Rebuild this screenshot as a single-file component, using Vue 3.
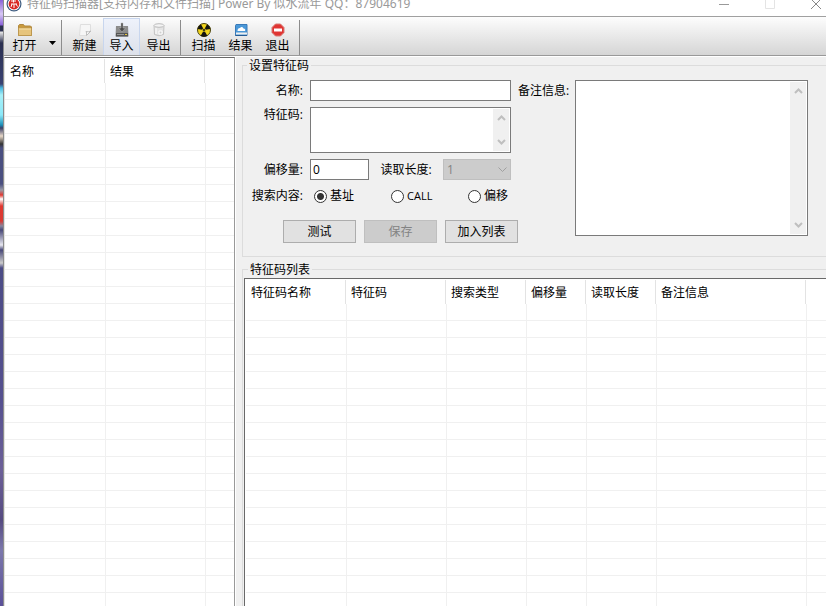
<script setup>
import { ref } from 'vue'

const name = ref('')
const code = ref('')
const offset = ref('0')
const length = ref('1')
const target = ref('基址')
const remark = ref('')
const targets = ['基址', 'CALL', '偏移']
const resultColumns = [
  { title: '名称', width: 100 },
  { title: '结果', width: 100 },
]
const codeColumns = [
  { title: '特征码名称', width: 100 },
  { title: '特征码', width: 100 },
  { title: '搜索类型', width: 80 },
  { title: '偏移量', width: 60 },
  { title: '读取长度', width: 70 },
  { title: '备注信息', width: 150 },
]
const rowCount = 60
</script>

<template>
  <div class="screen">
    <div class="desktop"></div>
    <div class="window">
      <header class="titlebar">
        <svg class="app-icon" width="16" height="16" viewBox="0 0 16 16">
          <circle cx="8" cy="8" r="7.5" fill="#3d5c80" />
          <circle cx="8" cy="8" r="6.3" fill="#fff" />
          <circle cx="8" cy="8" r="5.4" fill="#d92a25" />
          <path d="M5 5h5M7.5 3.5v3M5 8h6M6 8l-1 3M8 8v4M10 8l1.500 2.500" stroke="#fff" fill="none" />
        </svg>
        <h1 class="title">特征码扫描器[支持内存和文件扫描] Power By 似水流年 QQ：87904619</h1>
        <div class="controls">
          <button class="control" aria-label="最小化">
            <svg width="10" height="10" viewBox="0 0 10 10"><path d="M0 5.500h10" stroke="#999" /></svg>
          </button>
          <button class="control" aria-label="最大化" disabled>
            <svg width="10" height="10" viewBox="0 0 10 10"><path d="M.5.5h9v9h-9z" stroke="#e4e4e4" fill="none" /></svg>
          </button>
          <button class="control" aria-label="关闭">
            <svg width="10" height="10" viewBox="0 0 10 10"><path d="M0 0l10 10M10 0L0 10" stroke="#888" /></svg>
          </button>
        </div>
      </header>

      <nav class="toolbar">
        <button class="tool">
          <svg width="16" height="16" viewBox="0 0 16 16">
            <path d="M1.500 13.500v-10l1-1h4l1 1.500h6l1 1v8.500z" fill="#c99a3c" stroke="#b08840" />
            <path d="M1.500 6h13v7.500h-13z" fill="#e6c47c" stroke="#bd9850" />
            <path d="M2 7h12" stroke="#f8e2a8" />
          </svg>
          <span>打开</span>
        </button>
        <button class="drop" aria-label="打开选项">
          <svg width="7" height="4" viewBox="0 0 7 4"><path d="M0 0h7L3.500 4z" /></svg>
        </button>
        <i class="divider"></i>
        <button class="tool">
          <svg width="16" height="16" viewBox="0 0 16 16">
            <path d="M3.500 2.500h10v7l-4 4h-7z" fill="#f6f6f6" stroke="#dedede" />
            <path d="M9.500 13.500q.5-3-.5-4 2 1 5-.5z" fill="#fff" stroke="#bdbdbd" />
          </svg>
          <span>新建</span>
        </button>
        <button class="tool active">
          <svg width="16" height="16" viewBox="0 0 16 16">
            <path d="M2 4h12l.5 10.500h-13z" fill="#8b8b8b" />
            <path d="M2 11h12v3.500H2z" fill="#555" />
            <path d="M3 12.500h7" stroke="#999" />
            <path d="M11 12h2v1h-2z" fill="#e8c638" />
            <path d="M7 1h2v5h2.500L8 10 4.500 6H7z" fill="#4c4c4c" stroke="#b8b8b8" stroke-width=".5" />
          </svg>
          <span>导入</span>
        </button>
        <button class="tool">
          <svg width="16" height="16" viewBox="0 0 16 16">
            <path d="M3 3.500h10l-.5 9q-4.500 2.500-9 0z" fill="#e4e4e4" stroke="#c4c4c4" />
            <ellipse cx="8" cy="3.500" rx="5" ry="1.800" fill="#f4f4f4" stroke="#bcbcbc" />
            <path d="M5 6v6M8 9h3v3H8z" stroke="#fff" fill="#cfcfcf" />
          </svg>
          <span>导出</span>
        </button>
        <i class="divider"></i>
        <button class="tool">
          <svg width="16" height="16" viewBox="0 0 16 16">
            <circle cx="8" cy="8" r="6.500" fill="#f2d51c" stroke="#4a430c" />
            <path d="M8 8L1.500 7A6.500 6.500 0 0 1 5 2.300zM8 8l3-5.700A6.500 6.500 0 0 1 14.500 7zM8 8l3.300 5.700a6.500 6.500 0 0 1-6.600 0z" fill="#151510" />
            <circle cx="8" cy="8" r="1.500" fill="#151510" stroke="#f2d51c" stroke-width=".7" />
          </svg>
          <span>扫描</span>
        </button>
        <button class="tool">
          <svg width="16" height="16" viewBox="0 0 16 16">
            <path d="M3 2.500h11v11H2.500v-10z" fill="#4a98d8" stroke="#3a7ab8" />
            <path d="M4.500 9h7.500q1-2-1.500-2.500Q9 4 7 6 4.500 6 4.500 9z" fill="#fff" />
            <path d="M3 11.500h11" stroke="#eee" stroke-width="2" />
            <path d="M2.500 13.500h11.500" stroke="#245b94" />
          </svg>
          <span>结果</span>
        </button>
        <button class="tool">
          <svg width="16" height="16" viewBox="0 0 16 16">
            <path d="M5.500 2h5l3.500 3.500v5L10.500 14h-5L2 10.500v-5z" fill="#e03533" stroke="#d87a74" />
            <path d="M4 6.500h8v3H4z" fill="#fff" />
          </svg>
          <span>退出</span>
        </button>
        <i class="divider"></i>
      </nav>

      <main class="content">
        <section class="results">
          <table class="list">
            <colgroup>
              <col v-for="c in resultColumns" :key="c.title" :style="{ width: c.width + 'px' }" />
              <col />
            </colgroup>
            <thead>
              <tr><th v-for="c in resultColumns" :key="c.title">{{ c.title }}</th><th></th></tr>
            </thead>
            <tbody>
              <tr v-for="r in rowCount" :key="r"><td v-for="c in resultColumns" :key="c.title"></td><td></td></tr>
            </tbody>
          </table>
        </section>

        <div class="side">
          <fieldset class="group">
            <legend>设置特征码</legend>
            <form class="form" @submit.prevent>
              <label for="name" class="caption">名称:</label>
              <input id="name" v-model="name" class="box field" type="text" />
              <label for="remark" class="remark-label">备注信息:</label>
              <div class="memo remark">
                <textarea id="remark" v-model="remark"></textarea>
                <div class="scroll">
                  <svg width="9" height="6" viewBox="0 0 9 6"><path d="M1 5l3.500-3.500L8 5" /></svg>
                  <svg width="9" height="6" viewBox="0 0 9 6"><path d="M1 1l3.500 3.500L8 1" /></svg>
                </div>
              </div>

              <label for="code" class="caption top">特征码:</label>
              <div class="memo field">
                <textarea id="code" v-model="code"></textarea>
                <div class="scroll">
                  <svg width="9" height="6" viewBox="0 0 9 6"><path d="M1 5l3.500-3.500L8 5" /></svg>
                  <svg width="9" height="6" viewBox="0 0 9 6"><path d="M1 1l3.500 3.500L8 1" /></svg>
                </div>
              </div>

              <label for="offset" class="caption">偏移量:</label>
              <div class="pair field">
                <input id="offset" v-model="offset" class="box short" type="text" />
                <label for="length">读取长度:</label>
                <div class="select">
                  <select id="length" v-model="length" disabled><option>1</option></select>
                  <svg width="9" height="6" viewBox="0 0 9 6"><path d="M.5.5l4 4 4-4" /></svg>
                </div>
              </div>

              <span id="target-label" class="caption">搜索内容:</span>
              <div class="radios field" role="radiogroup" aria-labelledby="target-label">
                <label v-for="t in targets" :key="t" :class="{ latin: t === 'CALL' }">
                  <input v-model="target" type="radio" name="target" :value="t" />{{ t }}
                </label>
              </div>

              <div class="actions">
                <button type="button">测试</button>
                <button type="button" disabled>保存</button>
                <button type="button">加入列表</button>
              </div>
            </form>
          </fieldset>

          <fieldset class="group codes">
            <legend>特征码列表</legend>
            <div class="frame">
              <table class="list">
                <colgroup>
                  <col v-for="c in codeColumns" :key="c.title" :style="{ width: c.width + 'px' }" />
                  <col />
                </colgroup>
                <thead>
                  <tr><th v-for="c in codeColumns" :key="c.title">{{ c.title }}</th><th></th></tr>
                </thead>
                <tbody>
                  <tr v-for="r in rowCount" :key="r"><td v-for="c in codeColumns" :key="c.title"></td><td></td></tr>
                </tbody>
              </table>
            </div>
          </fieldset>
        </div>
      </main>
    </div>
  </div>
</template>

<style>
body {
  margin: 0;
  overflow: hidden;
}
</style>

<style scoped>
* {
  box-sizing: border-box;
}
.screen,
.screen button,
.screen input,
.screen select,
.screen textarea {
  font: 12px/16px "Open Sans", "Noto Sans CJK SC", sans-serif;
  color: #000;
}
.screen {
  display: flex;
  height: 100vh;
  overflow: hidden;
}
.desktop {
  width: 3px;
  background: linear-gradient(
    #8a62d8 0, #d8c8f4 14px, #8a62d8 25px, #2b3050 26px, #2b3050 31px, #e8e8e8 32px, #2b3050 43px,
    #3a4272 84px, #48b8e0 88px, #a8f0f8 95px, #8ce8f8 115px, #1c8fb8 125px, #3a3f68 128px,
    #e8d8c8 136px, #333 144px, #4a4f80 148px, #4a4f80 184px, #9a9aa8 190px, #e03830 195px,
    #fff 199px, #e03830 206px, #d83a34 221px, #8888a0 226px, #484878 230px, #e8e8f0 245px,
    #484878 250px, #ccc 263px, #4c4c86 268px, #55508f 400px, #6c6098 470px, #554a80 520px,
    #7c78ac 550px, #5a5098 100%
  );
}
.window {
  display: flex;
  flex: 1;
  flex-direction: column;
  min-width: 0;
  border-left: 1px solid #8c8c8c;
  background: #f0f0f0;
}
.titlebar {
  display: flex;
  flex: none;
  align-items: center;
  height: 17px;
  padding: 0 5px 9px 2px;
  border-bottom: 1px solid #a0a0a0;
  background: #fff;
}
.app-icon,
.control {
  flex: none;
}
.title {
  flex: 1;
  margin: 0 0 0 5px;
  font-family: "Noto Sans", "Noto Sans CJK SC", sans-serif;
  font-size: 12px;
  font-weight: normal;
  line-height: 16px;
  white-space: nowrap;
  color: #999;
}
.controls {
  display: flex;
  gap: 36px;
}
.control {
  display: flex;
  padding: 0;
  border: 0;
  background: none;
}
.toolbar {
  display: flex;
  flex: none;
  height: 39px;
  padding-left: 2px;
  border-bottom: 1px solid #999;
  background: linear-gradient(#fdfdfd, #d5d5d5);
}
.tool {
  display: flex;
  flex-direction: column;
  align-items: center;
  width: 37px;
  margin-top: 1px;
  padding: 3px 0 0;
  border: 1px solid transparent;
  background: none;
}
.tool.active {
  border-color: #c8d6ee;
  border-bottom: 0;
  background: linear-gradient(#eef2fb, #dde1ea);
}
.drop {
  display: flex;
  align-items: center;
  width: 15px;
  padding: 13px 0 0 6px;
  border: 0;
  background: none;
}
.drop svg {
  flex: none;
}
.divider {
  width: 1px;
  margin: 3px 4px 0 3px;
  background: #8c8c8c;
}
.content {
  display: flex;
  flex: 1;
  min-height: 0;
  border-top: 1px solid #fff;
}
.results {
  flex: none;
  width: 231px;
  padding-top: 1px;
  overflow: hidden;
  border-top: 1px solid #696969;
  border-right: 1px solid #999;
  border-left: 1px solid #e3e3e3;
  background: #fff;
}
.list {
  width: 100%;
  table-layout: fixed;
  border-collapse: separate;
  border-spacing: 0;
}
th {
  height: 24px;
  padding: 2px 0 0 5px;
  border-right: 1px solid #e3e3e3;
  font-weight: normal;
  text-align: left;
  white-space: nowrap;
}
th:last-child {
  border-right: 0;
}
td {
  height: 17px;
  padding: 0;
  border-bottom: 1px solid #f0f0f0;
}
td + td {
  border-left: 1px solid #f0f0f0;
}
.side {
  display: flex;
  flex: 1;
  flex-direction: column;
  gap: 6px;
  min-width: 0;
  padding: 2px 0 0 6px;
  border-left: 1px solid #fff;
}
.group {
  min-width: 0;
  margin: 0;
  padding: 8px 18px 13px 0;
  border: 1px solid #dcdcdc;
  border-right: 0;
}
legend {
  height: 13px;
  margin-left: 4px;
  padding: 0 2px;
  line-height: 14px;
}
.form {
  display: grid;
  grid-template-columns: 60px 201px 50px 1fr;
  grid-template-rows: 21px 46px 21px 20px auto;
  gap: 6px 7px;
  align-items: center;
}
.form label,
.caption {
  text-align: right;
  white-space: nowrap;
}
.caption {
  grid-column: 1;
}
.field {
  grid-column: 2;
}
.form .top {
  align-self: start;
}
.form .remark-label {
  grid-row: 1;
  grid-column: 3;
}
.box {
  width: 100%;
  height: 21px;
  padding: 0 2px;
  border: 1px solid #7a7a7a;
  background: #fff;
}
.short {
  width: 59px;
}
.memo {
  display: flex;
  height: 100%;
  padding: 1px;
  border: 1px solid #7a7a7a;
  background: #fff;
}
.remark {
  grid-row: 1 / 6;
  grid-column: 4;
  height: 156px;
  align-self: start;
}
.memo textarea {
  flex: 1;
  min-width: 0;
  padding: 0 2px;
  border: 0;
  resize: none;
  background: transparent;
}
.scroll {
  display: flex;
  flex-direction: column;
  align-items: center;
  justify-content: space-between;
  width: 16px;
  padding: 6px 0;
  background: #f0f0f0;
}
.scroll path {
  fill: none;
  stroke: #bfbfbf;
  stroke-width: 2;
}
.pair {
  display: flex;
  align-items: center;
  justify-content: space-between;
}
.select {
  display: grid;
  align-items: center;
  width: 68px;
}
.select select {
  grid-area: 1 / 1;
  height: 21px;
  padding: 0 3px;
  appearance: none;
  border: 1px solid #bfbfbf;
  border-radius: 0;
  background: #ccc;
  color: #838383;
  opacity: 1;
}
.select svg {
  z-index: 1;
  grid-area: 1 / 1;
  justify-self: end;
  margin-right: 4px;
  pointer-events: none;
}
.select path {
  fill: none;
  stroke: #a0a0a0;
}
.radios {
  display: grid;
  grid-template-columns: 77px 77px 1fr;
  padding-left: 4px;
}
.radios label {
  display: flex;
  gap: 3px;
  align-items: center;
}
.radios .latin {
  font-size: 11px;
}
.radios input {
  width: 13px;
  height: 13px;
  margin: 0;
  appearance: none;
  border: 1px solid #333;
  border-radius: 50%;
  background: #fff;
}
.radios input:checked {
  background: radial-gradient(circle, #333 0 3px, #fff 4px);
}
.actions {
  display: flex;
  grid-column: 1 / 4;
  gap: 8px;
  padding: 8px 0 0 40px;
}
.actions button {
  flex: none;
  width: 73px;
  height: 23px;
  padding: 0;
  border: 1px solid #adadad;
  background: #e1e1e1;
}
.actions button:disabled {
  border-color: #bfbfbf;
  background: #ccc;
  color: #838383;
}
.codes {
  flex: 1;
  min-height: 0;
  padding: 2px 0 0 1px;
  border-bottom: 0;
}
.frame {
  padding: 1px 0 0 1px;
  border-top: 1px solid #696969;
  border-left: 1px solid #696969;
  background: #fff;
}
</style>
